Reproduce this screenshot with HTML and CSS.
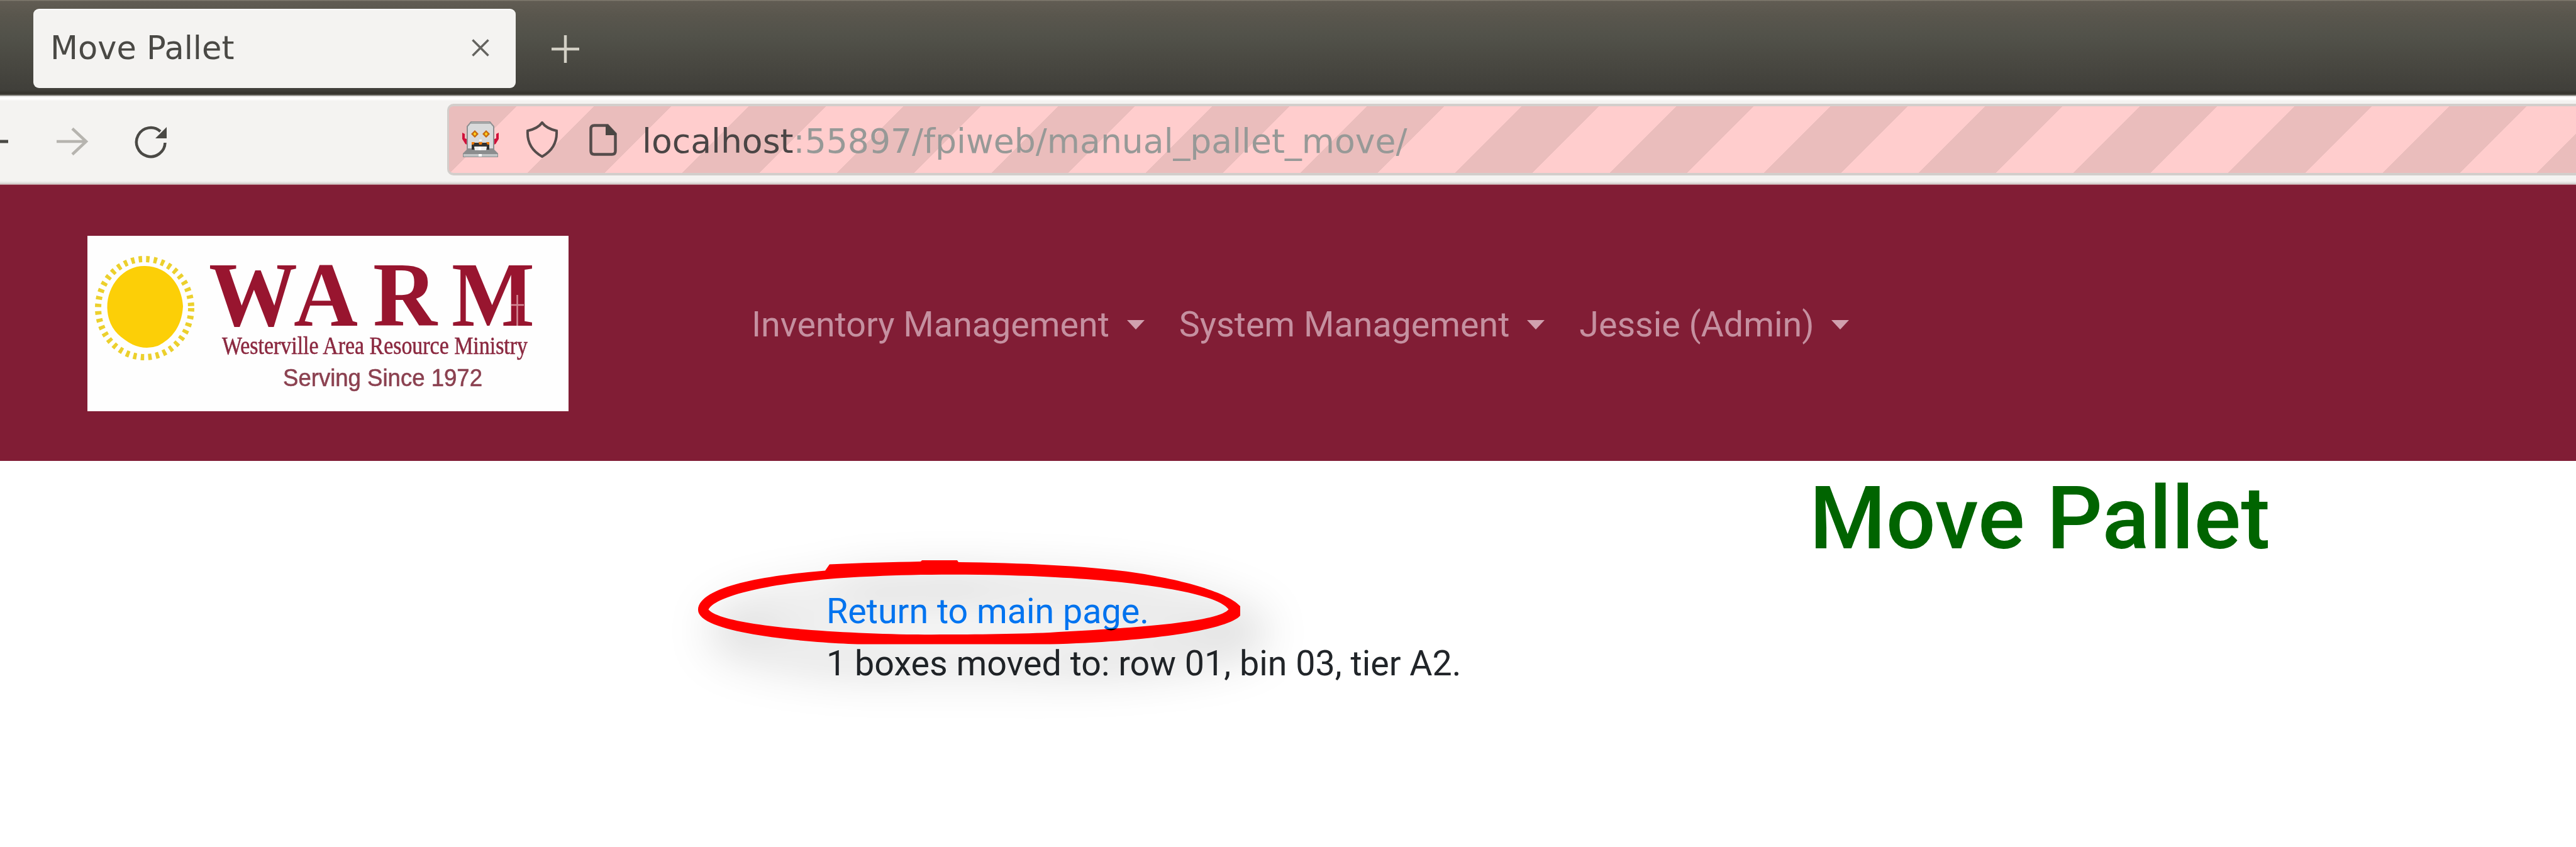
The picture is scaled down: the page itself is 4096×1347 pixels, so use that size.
FILE: index.html
```html
<!DOCTYPE html>
<html lang="en">
<head>
<meta charset="utf-8">
<title>Move Pallet</title>
<link rel="stylesheet" href="styles.css">
</head>
<body>
<div class="titlebar">
  <div class="tab">
    <span class="tab-title">Move Pallet</span>
    <svg class="tab-close" viewBox="0 0 28 28"><path d="M1.500 1.500 26.500 26.500M26.500 1.500 1.500 26.500"/></svg>
  </div>
  <svg class="new-tab" viewBox="0 0 44 44"><path d="M22 0V44M0 22H44"/></svg>
</div>
<div class="toolbar">
  <svg class="nav-icons" viewBox="0 0 270 60">
    <path class="ico-back" d="M0 30H13"/>
    <path class="ico-forward" d="M90 30H137M115 9.500 137 30 115 50.500"/>
    <path class="ico-reload" d="M262.500 32A22.800 23 0 1 1 255 14"/>
    <path class="ico-solid" d="M265 7V25H247Z"/>
  </svg>
  <div class="urlbar">
    <svg class="robot" viewBox="0 0 58 58">
      <path d="M0 18 4 20V27L10 29V38L5 36 0 28ZM58 18 54 20V27L48 29V38L53 36 58 28Z" fill="#d0103a"/>
      <path d="M14 1H44L50 8V48H8V8Z" fill="#d9dadb" stroke="#8d8f91" stroke-width="2"/>
      <path d="M15 1H43L45 4H13Z" fill="#a5a7a8"/>
      <path d="M9 43H49L57 51V57H1V51Z" fill="#8b8d8e"/>
      <path d="M2 52H56V56H2Z" fill="#c2c4c5"/>
      <path d="M20 14 26 20 20 26 14 20ZM38 14 44 20 38 26 32 20Z" fill="#c76a10"/>
      <path d="M20 17 22.500 20 20 23 17.500 20ZM38 17 40.500 20 38 23 35.500 20Z" fill="#ffd21c"/>
      <path d="M15 34H43V45H39V40H19V45H15Z" fill="#333"/>
      <path d="M15 33H20L18 37H15ZM26 33H32L31 37H27ZM38 33H43V37H40Z" fill="#f07800"/>
      <path d="M20 40H38V46H20Z" fill="#efefef"/>
      <path d="M27 29H31V31H27ZM26 52H31V56H26ZM26 40H30V46H26Z" fill="#fff"/>
    </svg>
    <svg class="shield" viewBox="0 0 52 58"><path d="M26 2C21 9 12 13 3 15C2 32 8 46 26 56C44 46 50 32 49 15C40 13 31 9 26 2Z"/></svg>
    <svg class="page" viewBox="0 0 44 51"><path class="outline" d="M8 2.500H29L41.500 16V43Q41.500 48.500 36 48.500H8Q2.500 48.500 2.500 43V8Q2.500 2.500 8 2.500Z"/><path class="fold" d="M26 2H30L43 16V18H26Z"/></svg>
    <span class="url"><span class="host">localhost</span>:55897/fpiweb/manual_pallet_move/</span>
  </div>
</div>
<header class="navbar">
  <svg class="logo" viewBox="0 0 765 279">
    <ellipse class="rays" cx="91" cy="115" rx="74" ry="78"/>
    <path class="sun" d="M92 48C128 49 150 78 152 112C150 150 128 167 112 175Q92 182 72 173C48 160 33 145 31.500 115C31 78 58 47 92 48Z"/>
    <g class="warm">
      <text x="193" y="143" textLength="141" lengthAdjust="spacingAndGlyphs">W</text>
      <text x="328" y="143" textLength="102" lengthAdjust="spacingAndGlyphs">A</text>
      <text x="454" y="143" textLength="102" lengthAdjust="spacingAndGlyphs">R</text>
      <text x="579" y="143" textLength="132" lengthAdjust="spacingAndGlyphs">M</text>
    </g>
    <path class="cross" d="M683.500 113V143M674 110H694M683.500 94V113"/>
    <text class="ministry" x="214" y="188" textLength="486" lengthAdjust="spacingAndGlyphs">Westerville Area Resource Ministry</text>
    <text class="since" x="311" y="239" textLength="317" lengthAdjust="spacingAndGlyphs">Serving Since 1972</text>
  </svg>
  <nav class="menu">
    <a class="menu-item">Inventory Management <i class="caret"></i></a>
    <a class="menu-item">System Management <i class="caret"></i></a>
    <a class="menu-item">Jessie (Admin) <i class="caret"></i></a>
  </nav>
</header>
<main class="content">
  <h1>Move Pallet</h1>
  <div class="result">
    <a class="return">Return to main page.</a>
    <p>1 boxes moved to: row 01, bin 03, tier A2.</p>
  </div>
  <svg class="marker" viewBox="1000 800 1100 400">
    <path fill-rule="evenodd" d="M1319 897.500C1365 895 1420 894 1464 893L1466 891H1522L1524 894C1620 895 1730 900 1800 910C1870 920 1950 940 1972 964V979C1955 1000 1840 1020 1669 1024.500H1364C1270 1021 1110 1006 1110 970C1111 932 1220 915 1312 907.500ZM1126.500 969.500C1140 943 1260 921 1390 916.500C1470 912.500 1590 913 1678 918C1800 924 1935 942 1953.500 969C1940 988 1820 998 1669 1006C1600 1009 1490 1009.500 1442 1009C1310 1006 1150 995 1126.500 969.500Z"/>
  </svg>
</main>
</body>
</html>
```
FILE: styles.css
```css
* { box-sizing: border-box; }
body {
  margin: 0;
  height: 1347px;
  overflow: hidden;
  background: #fff;
  font-family: Roboto, "Liberation Sans", sans-serif;
  font-size: 55.600px;
  color: #212529;
}
svg { display: block; flex: none; }

.titlebar {
  height: 152px;
  padding: 14px 0 0 53px;
  display: flex;
  align-items: flex-start;
  gap: 58px;
  background: linear-gradient(#8a8378 0, #615c53 2px, #59564d 25px, #52524a 55px, #4a4942 95px, #403f3a 143px, #34322c 149px, #77756f 152px);
}
.tab {
  width: 767px;
  height: 126px;
  padding: 0 42px 4px 27px;
  display: flex;
  align-items: center;
  justify-content: space-between;
  border-radius: 9px;
  background: #f4f3f1;
  border-top: 2px solid #fdfdfc;
  font-family: "DejaVu Sans", sans-serif;
  font-size: 51px;
  color: #4a4945;
}
.tab-close { width: 28px; height: 28px; fill: none; stroke: #64635f; stroke-width: 3.500; }
.new-tab { width: 44px; height: 44px; margin-top: 42px; margin-left: -1px; fill: none; stroke: #d3d0c5; stroke-width: 4.500; }

.toolbar {
  height: 142px;
  padding-top: 13px;
  display: flex;
  align-items: flex-start;
  background: linear-gradient(#d0cfcd 0, #fff 3px, #fff 5px, #f4f3f1 9px, #f4f3f1 136px, #d8d8d4 140px, #b77f88 142px);
}
.nav-icons { width: 270px; height: 60px; margin-top: 30px; fill: none; stroke-width: 4.500; }
.ico-back { stroke: #4a4945; stroke-width: 5; }
.ico-forward { stroke: #b6b4af; }
.ico-reload { stroke: #4a4945; }
.ico-solid { fill: #4a4945; }
.urlbar {
  flex: 1;
  height: 114px;
  margin-left: 441px;
  padding-left: 21px;
  display: flex;
  align-items: center;
  border: solid #d3cecb;
  border-width: 4px 0 4px 3px;
  border-radius: 10px 0 0 10px;
  background: repeating-linear-gradient(135deg, #eabdbc 0 76.200px, #ffcdcd 76.200px 163.100px, #eabdbc 163.100px 173.800px);
}
.robot { width: 58px; height: 58px; }
.shield { width: 52px; height: 58px; margin-left: 43px; fill: none; stroke: #554c4b; stroke-width: 4; }
.page { width: 44px; height: 51px; margin-left: 49px; }
.page .outline { fill: none; stroke: #554c4b; stroke-width: 4.500; }
.page .fold { fill: #4a4542; }
.url {
  margin-left: 40px;
  padding-top: 5px;
  font-family: "DejaVu Sans", sans-serif;
  font-size: 53.600px;
  white-space: nowrap;
  color: #979997;
}
.host { color: #4a4545; }

.navbar {
  height: 439px;
  padding-left: 139px;
  display: flex;
  align-items: center;
  background: #811d35;
}
.logo { width: 765px; height: 279px; margin-top: 2px; background: #fefefe; }
.rays { fill: none; stroke: #ecd02c; stroke-width: 10; stroke-dasharray: 5.500 6.500; }
.sun { fill: #fccf07; }
.warm { font: bold 147px "Liberation Serif", serif; fill: #98152f; }
.cross { fill: none; stroke: #d48a96; stroke-width: 2.500; }
.ministry { font: 40px "Liberation Serif", serif; fill: #8b2940; stroke: #8b2940; stroke-width: .6px; }
.since { font: 39px "Liberation Sans", sans-serif; fill: #8b4150; stroke: #8b4150; stroke-width: .6px; }
.menu { display: flex; gap: 55px; margin-left: 291px; padding-top: 5px; line-height: 84px; color: #c590a0; }
.menu-item { display: flex; align-items: center; white-space: pre; }
.caret {
  margin-left: 14px;
  border: 14px solid transparent;
  border-top: 15px solid #d0a0ae;
  border-bottom: 0;
}

.content { position: relative; }
h1 {
  margin: 0;
  padding: 7px 0 0 2877px;
  font-size: 139.300px;
  line-height: 170px;
  font-weight: 500;
  color: #006400;
}
.result { padding: 21px 0 0 1314px; line-height: 83px; }
.return { display: block; color: #007bff; }
.result p { margin: 0; }
.marker {
  position: absolute;
  left: 1000px;
  top: 67px;
  width: 1100px;
  height: 400px;
  overflow: visible;
  fill: #f00;
  filter: drop-shadow(30px 35px 38px rgba(0, 0, 0, .36));
  mix-blend-mode: multiply;
}
```
